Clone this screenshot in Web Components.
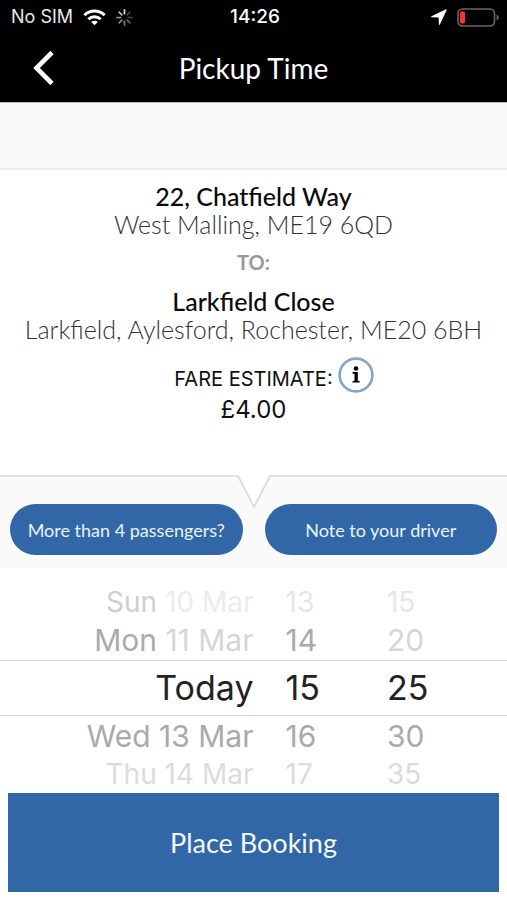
<!DOCTYPE html>
<html lang="en">
<head>
<meta charset="utf-8">
<meta name="viewport" content="width=device-width, initial-scale=1">
<title>Pickup Time</title>
<style>
body { margin: 0; background: #fff; color: #111; font-family: Lato, "Liberation Sans", sans-serif; }
</style>
</head>
<body>
<booking-screen></booking-screen>
<script>
const define = (name, html, setup) => customElements.define(name, class extends HTMLElement {
  constructor() {
    super();
    this.attachShadow({ mode: 'open' });
  }
  connectedCallback() {
    this.shadowRoot.innerHTML = html;
    if (setup) setup(this, this.shadowRoot);
  }
});

define('status-bar', `
<style>
:host { display: grid; grid-template-columns: 1fr auto 1fr; align-items: center; height: 34px; padding: 0 8px 0 11px; background: #000; color: #e8e8e8; font: 18px/24px Inter, "Liberation Sans", sans-serif; }
.side { display: flex; align-items: center; gap: 10px; }
.end { justify-content: flex-end; }
.time { font-size: 19px; font-weight: 500; color: #fff; }
svg { display: block; }
</style>
<div class="side"><span>No SIM</span>
<svg width="23" height="17" viewBox="0 0 23 17" fill="none" stroke="#fff" stroke-width="3" aria-label="Wi-Fi"><path d="M1.4 6.3a14.3 14.3 0 0 1 20.2 0"/><path d="M5.3 10.3a8.8 8.8 0 0 1 12.4 0"/><path d="M11.5 16.3 8.2 13a4.7 4.7 0 0 1 6.600 0z" fill="#fff" stroke="none"/></svg>
<svg width="17" height="17" viewBox="-9 -9 18 18" stroke-width="1.8" stroke-linecap="round" aria-label="Loading"><path d="M0-4V-8" stroke="#ddd"/><path d="m2.8-2.8 2.9-2.9" stroke="#444"/><path d="M4 0h4" stroke="#444"/><path d="m2.8 2.8 2.9 2.9" stroke="#666"/><path d="M0 4v4" stroke="#777"/><path d="m-2.8 2.8-2.9 2.9" stroke="#888"/><path d="M-4 0h-4" stroke="#999"/><path d="m-2.8-2.8-2.9-2.9" stroke="#bbb"/></svg></div>
<span class="time">14:26</span>
<div class="side end">
<svg width="16" height="16" viewBox="0 0 16 16" fill="#fff" aria-label="Location"><path d="M15 .3.5 7.200q-.8.600.2 1l6.900.3.300 6.800q.4 1.100 1 .1L15.700.9q.2-.7-.7-.6z"/></svg>
<svg width="42" height="19" viewBox="0 0 42 19" aria-label="Battery low"><rect x="1" y="1" width="36.500" height="17" rx="4.500" fill="none" stroke="#68686a" stroke-width="1.600"/><rect x="3" y="3.500" width="5" height="12" rx="1.500" fill="#f9362d"/><path d="M39.600 6.500q2.200.8 2.200 3t-2.200 3z" fill="#68686a"/></svg></div>`);

define('nav-bar', `
<style>
:host { display: grid; grid-template-columns: 1fr auto 1fr; align-items: center; height: 68px; padding: 0 31px; background: #000; color: #fff; border-bottom: 1px solid #bbb; }
button { justify-self: start; border: 0; padding: 0; background: none; }
svg { display: block; }
h1 { margin: 0; font-size: 28px; line-height: 32px; font-weight: 400; }
</style>
<button type="button" aria-label="Back"><svg width="26" height="36" viewBox="0 0 26 36" fill="none" stroke="#fff" stroke-width="4.600"><path d="M21 2.500 5.500 18 21 33.500"/></svg></button>
<h1><slot></slot></h1>`);

define('address-block', `
<style>
:host { display: block; text-align: center; font-size: 25px; line-height: 28px; }
h2 { margin: 0; font-size: 25px; line-height: 28px; font-weight: 500; color: #0b0b0b; }
p { margin: 0; font-weight: 300; color: #333; }
</style>
<h2></h2><p><slot></slot></p>`, (el, root) => { root.querySelector('h2').textContent = el.getAttribute('name'); });

define('fare-estimate', `
<style>
:host { display: block; text-align: center; font-family: Inter, "Liberation Sans", sans-serif; }
.row { display: grid; grid-template-columns: 1fr auto 1fr; align-items: end; column-gap: 5px; }
.label { grid-column: 2; font-size: 20px; line-height: 28px; }
button { width: 36px; height: 36px; padding: 0; border: 0; background: none; }
svg { display: block; }
.price { display: block; margin-top: 1px; font-size: 24px; line-height: 32px; }
</style>
<div class="row"><span class="label">FARE ESTIMATE:</span>
<button type="button" aria-label="Fare information"><svg width="36" height="36" viewBox="0 0 36 36"><circle cx="18" cy="18" r="16.400" fill="#fff" stroke="#7fa5d0" stroke-width="2.600"/><circle cx="18" cy="11.500" r="2.300"/><path d="M14.500 15h5.300v8.700l2 .5v1.300h-7.300v-1.300l2-.5v-6.800l-2-.5z"/></svg></button></div>
<span class="price"><slot></slot></span>`);

define('pill-button', `
<style>
:host { display: block; flex: 1; }
button { display: block; width: 100%; border: 0; border-radius: 26px; padding: 14px 8px 13px; background: #3167a7; color: #e9f3ff; font: 18px/24px Lato, "Liberation Sans", sans-serif; white-space: nowrap; }
</style>
<button type="button"><slot></slot></button>`);

define('action-strip', `
<style>
:host { display: block; position: relative; border-top: 2px solid #e3e3e3; background: #fafafa; padding: 27px 10px 13px; }
.row { display: flex; gap: 22px; }
svg { position: absolute; top: -2px; left: 50%; margin-left: -17px; }
</style>
<svg width="34" height="34" viewBox="0 0 34 34" aria-hidden="true"><path d="M1 0h32v1L17 32 1 1z" fill="#fff"/><path d="M0 1h1l16 31L33 1h1" fill="none" stroke="#dedede" stroke-width="2"/></svg>
<div class="row"><slot></slot></div>`);

define('wheel-picker', `
<style>
:host { display: grid; grid-template-columns: 50% 20% 30%; padding-top: 16px; font-family: Inter, "Liberation Sans", sans-serif; }
[role=listbox] { display: grid; grid-template-rows: 36px 40px 56px 40px 36px; }
button { display: block; width: 100%; border: 0; background: none; padding: 0 0 0 32px; text-align: left; font-family: inherit; white-space: nowrap; color: #aaa; font-size: 30px; line-height: 40px; }
.date button { padding: 0; text-align: right; }
button:nth-child(1), button:nth-child(5) { font-size: 28px; line-height: 36px; color: #dcdcdc; }
button:nth-child(1) { color: #e6e6e6; }
button:nth-child(3) { font-size: 34px; line-height: 54px; color: #222; border-top: 1px solid #d9d9d9; border-bottom: 1px solid #d9d9d9; }
.date button:nth-child(1) b { color: #cfcfcf; }
.date button:nth-child(1) { color: #ececec; }
.date button:nth-child(2), .minute button:nth-child(2) { color: #d6d6d6; }
b { font-weight: 400; color: #aaa; }
.date button:nth-child(5) b { color: #dcdcdc; }
</style>
<div class="date" role="listbox" aria-label="Date"></div>
<div class="hour" role="listbox" aria-label="Hour"></div>
<div class="minute" role="listbox" aria-label="Minute"></div>`, (el, root) => {
  for (const list of root.querySelectorAll('[role=listbox]')) {
    el.getAttribute(list.className).split(',').forEach((value, i) => {
      const option = document.createElement('button');
      option.type = 'button';
      option.setAttribute('role', 'option');
      option.setAttribute('aria-selected', i === 2);
      const [day, ...rest] = value.split(' ');
      if (rest.length) {
        const b = document.createElement('b');
        b.textContent = day;
        option.append(b, ' ' + rest.join(' '));
      } else option.textContent = day;
      list.append(option);
    });
  }
});

define('primary-button', `
<style>
:host { display: block; padding: 1px 8px 8px; }
button { display: block; width: 100%; border: 0; padding: 34px 8px 33px; background: #3167a7; color: #f4f9ff; font: 27px/32px Lato, "Liberation Sans", sans-serif; }
</style>
<button type="button"><slot></slot></button>`);

define('booking-screen', `
<style>
:host { display: block; }
.band { height: 65px; background: #fafafa; border-bottom: 2px solid #ececec; }
main { padding: 12px 8px 49px; }
.to { margin: 12px 0 13px; text-align: center; font-size: 20px; line-height: 24px; font-weight: 700; color: #999; }
fare-estimate { margin-top: 14px; }
</style>
<status-bar></status-bar>
<nav-bar>Pickup Time</nav-bar>
<div class="band"></div>
<main>
<address-block name="22, Chatfield Way">West Malling, ME19 6QD</address-block>
<p class="to">TO:</p>
<address-block name="Larkfield Close">Larkfield, Aylesford, Rochester, ME20 6BH</address-block>
<fare-estimate>£4.00</fare-estimate>
</main>
<action-strip><pill-button>More than 4 passengers?</pill-button><pill-button>Note to your driver</pill-button></action-strip>
<wheel-picker date="Sun 10 Mar,Mon 11 Mar,Today,Wed 13 Mar,Thu 14 Mar" hour="13,14,15,16,17" minute="15,20,25,30,35"></wheel-picker>
<primary-button>Place Booking</primary-button>`);
</script>
</body>
</html>
